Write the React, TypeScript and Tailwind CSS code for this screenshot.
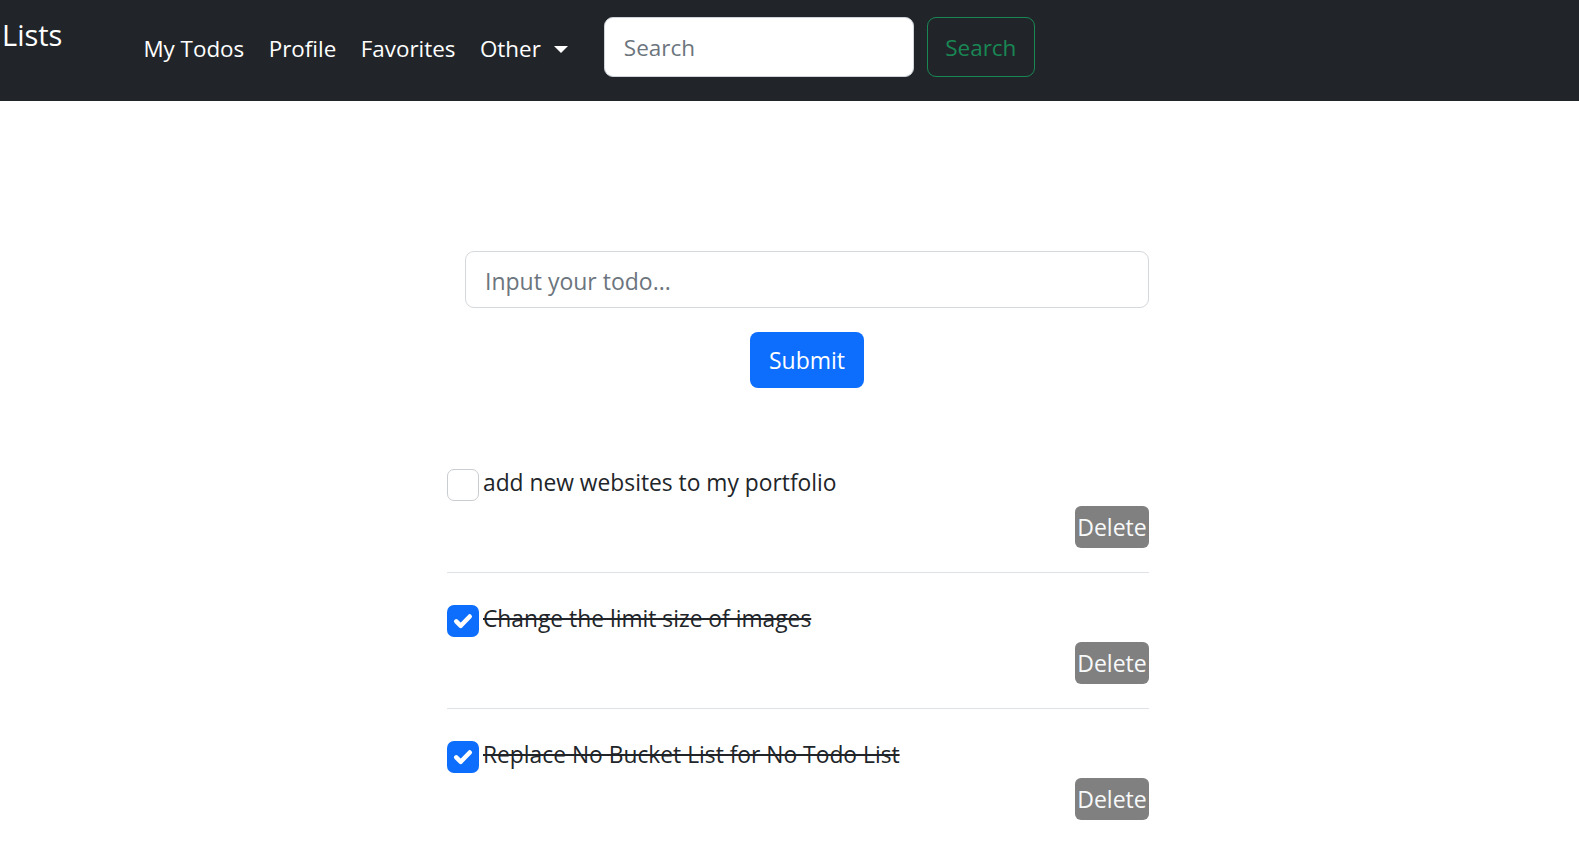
import React from "react";

const todos = [
  { text: "add new websites to my portfolio", done: false },
  { text: "Change the limit size of images", done: true },
  { text: "Replace No Bucket List for No Todo List", done: true },
];

function Check({ done }: { done: boolean }) {
  return done ? (
    <span className="flex h-[32px] w-[32px] shrink-0 items-center justify-center rounded-[7px] bg-[#0d6efd]">
      <svg width="30" height="30" viewBox="0 0 20 20">
        <path d="m5.5 10.2 3 3 6-6.2" fill="none" stroke="#fff" strokeWidth="3" strokeLinecap="round" strokeLinejoin="round" />
      </svg>
    </span>
  ) : (
    <span className="block h-[32px] w-[32px] shrink-0 rounded-[7px] border border-[#c9ccd0] bg-white" />
  );
}

export default function App() {
  return (
    <div className="min-h-screen bg-white text-[#212529]" style={{ fontFamily: '"Open Sans", "Noto Sans", sans-serif' }}>
      <nav className="flex h-[101px] items-start bg-[#212529]">
        <span className="ml-[2px] mt-[20px] text-[29px] leading-[30px] text-white">Lists</span>
        <ul className="ml-[81px] mt-[37px] flex items-center gap-[24.5px] text-[22.4px] leading-[24px] text-white">
          <li>My Todos</li>
          <li>Profile</li>
          <li>Favorites</li>
          <li className="flex items-center gap-[13px]">
            Other
            <span className="block h-0 w-0 border-l-[7px] border-r-[7px] border-t-[7px] border-l-transparent border-r-transparent border-t-white" />
          </li>
        </ul>
        <div className="ml-[36px] mt-[17px] flex items-center gap-[13px]">
          <div className="flex h-[60px] w-[310px] items-center rounded-[9px] border border-[#ced4da] bg-white pl-[19px] pt-[2px] text-[22.5px] text-[#6c757d]">
            Search
          </div>
          <div className="flex h-[60px] w-[108px] items-center justify-center rounded-[9px] border border-[#198754] pt-[2px] text-[22.5px] text-[#198754]">
            Search
          </div>
        </div>
      </nav>

      <main className="ml-[447px] w-[702px]">
        <div className="ml-[18px] mt-[150px] flex h-[57px] w-[684px] items-center rounded-[9px] border border-[#d5d8dc] pl-[19px] pt-[3px] text-[23px] text-[#6c757d]">
          Input your todo...
        </div>
        <div className="ml-[303px] mt-[24px] flex h-[56px] w-[114px] items-center justify-center rounded-[8px] bg-[#0d6efd] pt-[1px] text-[23px] text-white">
          Submit
        </div>

        <ul className="mt-[81px]">
          {todos.map((t, i) => (
            <li key={i} className={i === 0 ? "" : "pt-[32px]"}>
              <div className="flex h-[32px] items-center gap-[4px]">
                <Check done={t.done} />
                <span className={"pb-[4px] text-[22.8px] leading-[28px] " + (t.done ? "line-through" : "")}>{t.text}</span>
              </div>
              <div className="mt-[5px] flex justify-end">
                <span className="flex h-[42px] w-[74px] items-center justify-center rounded-[6px] bg-[#808080] text-[23px] text-[#f8f9fa]">
                  Delete
                </span>
              </div>
              {i < todos.length - 1 && <div className="mt-[24px] h-px bg-[#dee2e6]" />}
            </li>
          ))}
        </ul>
      </main>
    </div>
  );
}
